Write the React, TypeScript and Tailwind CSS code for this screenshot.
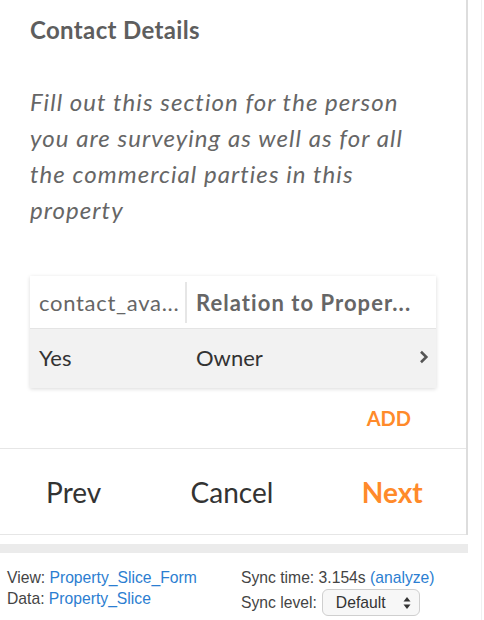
import React from "react";

export default function App() {
  return (
    <div className="w-[484px] h-[620px] bg-white relative overflow-hidden" style={{ fontFamily: "Lato, 'Open Sans', sans-serif" }}>
      <div className="flex h-[620px]">
        <div className="w-[482px] flex flex-col border-r border-[#f0f0f0]">
          <div className="w-[468px] border-r-2 border-[#dddddd] flex flex-col">
            <div className="pl-[30px] pt-[16px]">
              <h1 className="text-[24px] font-bold text-[#5e5e5e] leading-[28px] tracking-[0.35px]">Contact Details</h1>
              <p className="mt-[40px] w-[400px] text-[24px] italic text-[#666666] leading-[36px] tracking-[1.05px]">
                Fill out this section for the person you are surveying as well as for all the commercial parties in this property
              </p>
            </div>
            <div className="mx-[30px] mt-[48px] bg-white shadow-[0_1px_4px_rgba(0,0,0,0.15)]">
              <div className="flex h-[53px] items-center border-b border-[#e4e4e4]">
                <div className="w-[157px] pl-[9px] text-[22px] tracking-[0.7px] text-[#666666] border-r-2 border-[#e6e6e6] h-[41px] flex items-center whitespace-nowrap overflow-hidden">contact_ava...</div>
                <div className="pl-[9px] text-[22px] tracking-[1.05px] font-bold text-[#666666] whitespace-nowrap">Relation to Proper...</div>
              </div>
              <div className="flex h-[59px] items-center bg-[#f2f2f2]">
                <div className="w-[157px] pl-[9px] text-[22px] text-[#333333] pb-[3px]">Yes</div>
                <div className="pl-[9px] flex-1 text-[22px] text-[#333333] pb-[3px]">Owner</div>
                <svg width="10" height="14" viewBox="0 0 10 14" className="mr-[7px] mb-[3px]">
                  <path d="M2 1.8 L7.3 7 L2 12.2" fill="none" stroke="#555" strokeWidth="2.6" />
                </svg>
              </div>
            </div>
            <div className="flex justify-end pr-[55px] mt-[17px] h-[43px]">
              <span className="text-[20px] font-bold text-[#ff8a2a] leading-[26px]">ADD</span>
            </div>
            <div className="border-t border-[#e6e6e6] border-b h-[87px] grid grid-cols-3 items-center text-[28px] text-[#333333]">
              <div className="text-center pr-[8px]">Prev</div>
              <div className="text-center pr-[2px]">Cancel</div>
              <div className="text-center font-bold text-[#ff8a2a] pl-[8px]">Next</div>
            </div>
          </div>
          <div className="w-[468px] h-[9px] bg-[#ebebeb] mt-[9px]" />
          <div className="flex mt-[14px] text-[15.7px] leading-[21px] text-[#444444]" style={{ fontFamily: "'Liberation Sans', Arial, sans-serif" }}>
            <div className="w-[241px] pl-[7px]">
              <div>View: <span className="text-[#2b7ed1]">Property_Slice_Form</span></div>
              <div>Data: <span className="text-[#2b7ed1]">Property_Slice</span></div>
            </div>
            <div>
              <div>Sync time: 3.154s <span className="text-[#2b7ed1]">(analyze)</span></div>
              <div className="flex items-center mt-[1px]">
                <span>Sync level:</span>
                <div className="ml-[5px] w-[98px] h-[27px] rounded-[6px] border border-[#cfcfcf] bg-[#f7f7f7] flex items-center justify-between pl-[13px] pr-[8px] text-[#333]">
                  <span>Default</span>
                  <svg width="8" height="14" viewBox="0 0 8 14">
                    <path d="M4 1 L7.5 5.5 H0.5 Z" fill="#333" />
                    <path d="M4 13 L7.5 8.5 H0.5 Z" fill="#333" />
                  </svg>
                </div>
              </div>
            </div>
          </div>
        </div>
      </div>
    </div>
  );
}
